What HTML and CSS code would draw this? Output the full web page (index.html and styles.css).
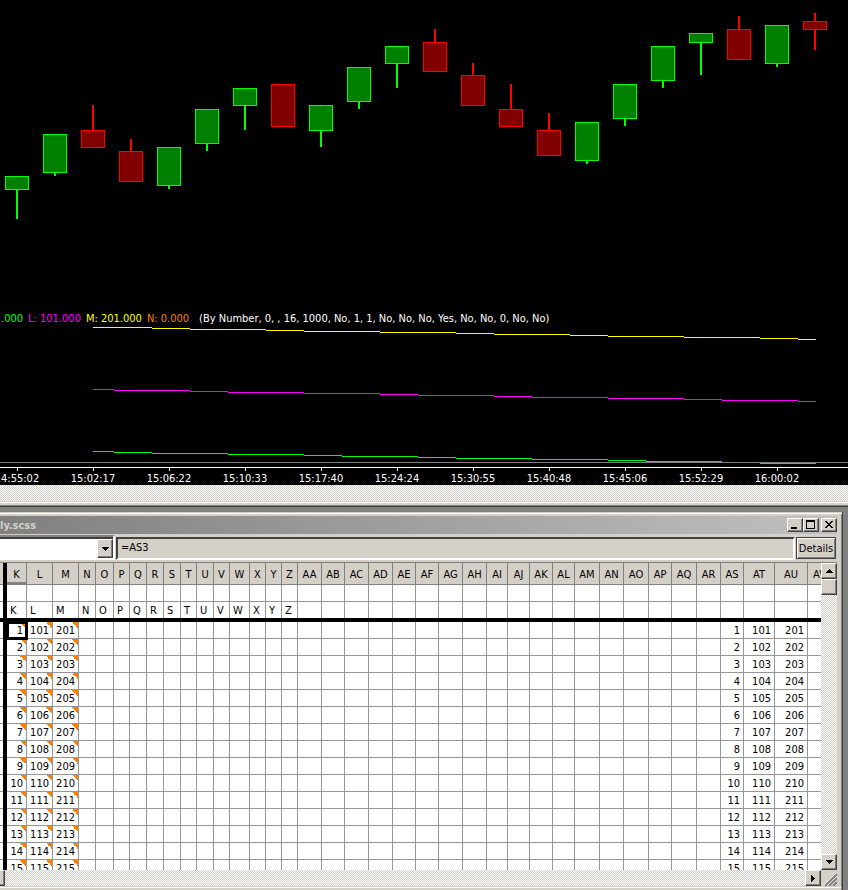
FILE: index.html
```html
<!DOCTYPE html>
<html lang="en">
<head>
    <meta charset="UTF-8">
    <meta name="viewport" content="width=device-width, initial-scale=1.0">
    <title>Chart and spreadsheet</title>
    <link rel="stylesheet" href="styles.css">
</head>
<body>
    <section class="chart">
        <svg class="candles" id="candles" height="311" shape-rendering="crispEdges"></svg>
        <p class="legend">
            <span class="green">.000</span>
            <span class="magenta">L: 101.000</span>
            <span class="yellow">M: 201.000</span>
            <span class="orange">N: 0.000</span>
            <span class="inputs">(By Number, 0, , 16, 1000, No, 1, 1, No, No, No, Yes, No, No, 0, No, No)</span>
        </p>
        <svg class="study" id="study" height="146" shape-rendering="crispEdges"></svg>
        <div class="times" id="times"></div>
    </section>
    <div class="chart-scroll"></div>
    <div class="chart-edge"></div>

    <main class="desk">
        <section class="window">
            <header class="title-bar">
                <h1 class="title">ly.scss</h1>
                <button class="win-btn" aria-label="Minimize"><svg width="12" height="10" shape-rendering="crispEdges"><path d="M2 7h6v2H2z"/></svg></button>
                <button class="win-btn" aria-label="Maximize"><svg width="12" height="10" shape-rendering="crispEdges"><path fill-rule="evenodd" d="M1 0h9v9H1zM2 2v6h7V2z"/></svg></button>
                <button class="win-btn close" aria-label="Close"><svg width="12" height="10" shape-rendering="crispEdges"><path d="M2 1h2v1h1v1h2V2h1V1h2v1H9v1H8v1H7v1h1v1h1v1h1v1H8V7H7V6H5v1H4v1H2V7h1V6h1V5h1V4H4V3H3V2H2z"/></svg></button>
            </header>
            <div class="formula-bar">
                <div class="cell-name">
                    <input class="name-box" type="text" aria-label="Cell name">
                    <button class="drop-btn" aria-label="Show names"><svg width="7" height="4" shape-rendering="crispEdges"><path d="M0 0h7v1H6v1H5v1H4v1H3V3H2V2H1V1H0z"/></svg></button>
                </div>
                <input class="formula" type="text" value="=AS3" aria-label="Formula">
                <button class="details">Details</button>
            </div>
            <div class="sheet">
                <div class="cells">
                    <table class="grid" id="grid"></table>
                </div>
                <div class="scroll-y">
                    <button class="scroll-btn" aria-label="Scroll up"><svg width="7" height="4" shape-rendering="crispEdges"><path d="M3 0h1v1h1v1h1v1h1v1H0V3h1V2h1V1h1z"/></svg></button>
                    <div class="thumb"></div>
                    <button class="scroll-btn last" aria-label="Scroll down"><svg width="7" height="4" shape-rendering="crispEdges"><path d="M0 0h7v1H6v1H5v1H4v1H3V3H2V2H1V1H0z"/></svg></button>
                </div>
                <div class="scroll-x">
                    <div class="thumb-end"></div>
                    <button class="scroll-btn" aria-label="Scroll right"><svg width="4" height="7" shape-rendering="crispEdges"><path d="M0 0h1v1h1v1h1v1h1v1H3v1H2v1H1v1H0z"/></svg></button>
                </div>
                <svg class="grip" width="16" height="16">
                    <path stroke="#fff" d="M3 15L15 3M7 15l8-8M11 15l4-4"/>
                    <path stroke="#808080" stroke-width="2" d="M4 16L16 4M8 16l8-8M12 16l4-4"/>
                </svg>
            </div>
        </section>
    </main>

<script>
    // [up or down, high, body top, body bottom, low]
    const candles = [
        ['up', 176, 176, 190, 219], ['up', 134, 134, 173, 176], ['down', 105, 130, 148, 148],
        ['down', 139, 151, 182, 182], ['up', 147, 147, 186, 189], ['up', 109, 109, 144, 151],
        ['up', 88, 88, 106, 130], ['down', 84, 84, 127, 127], ['up', 105, 105, 131, 147],
        ['up', 67, 67, 102, 109], ['up', 46, 46, 64, 88], ['down', 29, 42, 72, 72],
        ['down', 63, 75, 106, 106], ['down', 84, 109, 127, 127], ['down', 113, 130, 156, 156],
        ['up', 122, 122, 161, 164], ['up', 84, 84, 119, 126], ['up', 46, 46, 81, 88],
        ['up', 33, 33, 43, 75], ['down', 16, 29, 60, 60], ['up', 25, 25, 64, 67],
        ['down', 13, 21, 30, 50]
    ];
    const barSpacing = 38;

    let candleShapes = '';
    candles.forEach(([side, high, top, bottom, low], i) => {
        const x = 5 + i * barSpacing;
        candleShapes += `<g class="${side}">
            <rect class="wick" x="${x + 11}" y="${high}" width="2" height="${low - high}"/>
            <rect class="edge" x="${x}" y="${top}" width="24" height="${bottom - top}"/>
            <rect class="body" x="${x + 1}" y="${top + 1}" width="22" height="${bottom - top - 2}"/>
        </g>`;
    });
    document.querySelector('#candles').innerHTML = candleShapes;

    // every line drops one pixel at each of these x positions
    const lines = [
        ['#ffff00', 1, [93, 152, 190, 266, 304, 380, 456, 494, 570, 608, 684, 760, 798, 816]],
        ['#ff00ff', 63, [93, 114, 190, 228, 304, 380, 418, 494, 532, 608, 684, 722, 798, 816]],
        ['#00ff00', 125, [93, 114, 152, 228, 304, 342, 418, 456, 532, 608, 646, 722, 760, 816]]
    ];
    let studyShapes = '';
    lines.forEach(([color, y, stops]) => {
        for (let i = 0; i < stops.length - 1; i++) {
            studyShapes += `<rect fill="${color}" x="${stops[i]}" y="${y + i}" width="${stops[i + 1] - stops[i]}" height="1"/>`;
        }
    });
    studyShapes += '<rect fill="#808080" y="136" width="100%" height="1"/>';
    studyShapes += '<rect fill="#fff" y="141" width="100%" height="1"/>';

    const times = ['14:55:02', '15:02:17', '15:06:22', '15:10:33', '15:17:40', '15:24:24',
        '15:30:55', '15:40:48', '15:45:06', '15:52:29', '16:00:02'];
    times.forEach((time, i) => {
        studyShapes += `<rect fill="#fff" x="${17 + i * 76}" y="141" width="1" height="4"/>`;
    });
    document.querySelector('#study').innerHTML = studyShapes;
    document.querySelector('#times').innerHTML = times.map(time => `<span>${time}</span>`).join('');

    // the freeze column is the thick line left of K
    const columns = [
        ['', 3], ['freeze', 4], ['K', 20], ['L', 26], ['M', 26], ['N', 17], ['O', 18], ['P', 16], ['Q', 17],
        ['R', 17], ['S', 17], ['T', 16], ['U', 17], ['V', 16], ['W', 20], ['X', 16], ['Y', 16],
        ['Z', 16], ['AA', 24], ['AB', 23], ['AC', 24], ['AD', 24], ['AE', 23], ['AF', 23],
        ['AG', 24], ['AH', 24], ['AI', 21], ['AJ', 22], ['AK', 23], ['AL', 22], ['AM', 25],
        ['AN', 24], ['AO', 25], ['AP', 23], ['AQ', 25], ['AR', 24], ['AS', 23], ['AT', 31],
        ['AU', 33], ['AV', 24]
    ];
    const firstValue = { K: 1, L: 101, M: 201, AS: 1, AT: 101, AU: 201 };

    const row = (name, cell) => `<tr class="${name}">${columns.map(([col]) => cell(col)).join('')}</tr>`;
    let table = '<colgroup>' + columns.map(([col, width]) => `<col style="width: ${width}px">`).join('') + '</colgroup>';
    table += '<thead>' + row('head', col => `<th class="col-${col}">${col === 'freeze' ? '' : col}</th>`) + '</thead><tbody>';
    table += row('blank', col => `<td class="col-${col}"></td>`);
    table += row('names', col => `<td class="col-${col}">${col.length === 1 ? col : ''}</td>`);
    table += `<tr><td class="freeze-line" colspan="${columns.length}"></td></tr>`;
    for (let i = 0; i < 15; i++) {
        table += row('values', col => {
            const value = col in firstValue ? firstValue[col] + i : '';
            const note = 'KLM'.includes(col) && col ? ' note' : '';
            const active = col === 'K' && i === 0 ? ' active' : '';
            return `<td class="col-${col}${note}${active}">${value}</td>`;
        });
    }
    document.querySelector('#grid').innerHTML = table + '</tbody>';
</script>
</body>
</html>
```

FILE: styles.css
```css
*{
    box-sizing: border-box;
}
body{
    margin: 0;
    height: 100vh;
    display: flex;
    flex-direction: column;
    overflow: hidden;
    background-color: #808080;
    font-family: "DejaVu Sans Condensed", "DejaVu Sans", sans-serif;
    font-size: 11px;
    color: black;
}
button, input{
    font: inherit;
    color: inherit;
    margin: 0;
    padding: 0;
    border: none;
    border-radius: 0;
    outline: none;
}
svg{
    display: block;
}

/* chart */
.chart{
    background-color: black;
    color: white;
    overflow: hidden;
    flex: none;
}
.candles, .study{
    width: 100%;
}
.up .wick, .up .edge{
    fill: #00ff00;
}
.up .body{
    fill: #008000;
}
.down .wick, .down .edge{
    fill: #ff0000;
}
.down .body{
    fill: #800000;
}
.legend{
    display: flex;
    gap: 5px;
    margin: 0;
    padding-left: 1px;
    line-height: 15px;
    white-space: nowrap;
}
.green{
    color: #00ff00;
}
.magenta{
    color: #ff00ff;
}
.yellow{
    color: #ffff00;
}
.orange{
    color: #ff8000;
}
.inputs{
    margin-left: 5px;
}
.times{
    display: flex;
    margin-left: -21px;
    line-height: 13px;
}
.times span{
    flex: none;
    width: 76px;
    text-align: center;
}
.chart-scroll, .scroll-y, .scroll-x{
    background: repeating-conic-gradient(#d4d0c8 0 25%, #fff 0 50%) 0 0 / 2px 2px;
}
.chart-scroll{
    flex: none;
    height: 16px;
}
.chart-edge{
    flex: none;
    height: 6px;
    background-color: #d4d0c8;
    border-top: 1px solid #d4d0c8;
    border-bottom: 1px solid #404040;
    box-shadow: inset 0 1px #fff, inset 0 -1px #808080;
}

/* spreadsheet window */
.desk{
    flex: 1;
    min-height: 0;
    padding: 5px 5px 0 0;
}
.window{
    height: 100%;
    display: flex;
    flex-direction: column;
    padding: 4px 5px 4px 0;
    background-color: #d4d0c8;
    border-right: 1px solid #404040;
    box-shadow: inset 0 1px #d4d0c8, inset 0 2px #fff, inset -1px 0 #808080, inset 0 -2px #d4d0c8, inset 0 -3px #fff;
}
.title-bar{
    flex: none;
    height: 18px;
    display: flex;
    align-items: center;
    background: linear-gradient(to right, #808080, #c0c0c0);
}
.title{
    flex: 1;
    margin: 0;
    font-size: 11px;
    color: #d4d0c8;
}
.win-btn, .scroll-btn, .drop-btn, .thumb, .thumb-end{
    display: flex;
    align-items: center;
    justify-content: center;
    flex: none;
    background-color: #d4d0c8;
    border: 1px solid;
    border-color: #fff #404040 #404040 #fff;
    box-shadow: inset -1px -1px #808080;
}
.win-btn{
    width: 16px;
    height: 14px;
}
.close{
    margin-left: 2px;
}
.formula-bar{
    flex: none;
    display: flex;
    height: 29px;
    padding: 1px 1px 2px 0;
    border-bottom: 1px solid #808080;
}
.cell-name{
    flex: none;
    display: flex;
    width: 115px;
    border: 2px solid;
    border-color: #808080 #fff #fff #404040;
    border-left: none;
    box-shadow: inset 0 2px #404040;
    padding-top: 2px;
}
.name-box{
    flex: 1;
    min-width: 0;
    background-color: white;
}
.drop-btn{
    width: 16px;
}
.formula{
    flex: 1;
    min-width: 0;
    margin: 2px 1px 0;
    padding: 0 3px 3px;
    background-color: #d4d0c8;
    border: 2px solid;
    border-color: #404040 #fff #fff #404040;
}
.details{
    flex: none;
    width: 40px;
    margin: 2px 0 1px;
    background-color: #d4d0c8;
    border: 1px solid #404040;
    box-shadow: inset 1px 1px #fff, inset -1px -1px #808080;
}
.sheet{
    flex: 1;
    min-height: 0;
    display: grid;
    grid-template-columns: minmax(0, 1fr) 16px;
    grid-template-rows: minmax(0, 1fr) 16px;
}
.cells{
    overflow: hidden;
    background-color: white;
}
.grid{
    table-layout: fixed;
    width: 0;
    border-collapse: separate;
    border-spacing: 0;
}
.grid th, .grid td{
    height: 17px;
    padding: 2px 3px 0;
    border-right: 1px solid #969696;
    border-bottom: 1px solid #969696;
    line-height: 14px;
    font-weight: normal;
    white-space: nowrap;
    overflow: hidden;
}
.grid th{
    height: 22px;
    padding: 2px 0 0;
    background-color: #d4d0c8;
    border-color: #808080;
}
.grid .col-{
    padding: 0;
    border-right: none;
}
.grid .col-freeze{
    padding: 0;
    border: none;
    background-color: black;
}
.grid th.col-K{
    box-shadow: inset 0 -2px #808080;
}
.grid .names td{
    height: 16px;
    border-bottom: none;
    text-align: left;
}
.grid .freeze-line{
    height: 4px;
    padding: 0;
    border: none;
    background-color: black;
}
.values td{
    text-align: right;
}
.grid .note{
    background: linear-gradient(to bottom left, #ff8000 50%, transparent 50%) right top / 6px 6px no-repeat;
}
.grid .active{
    position: relative;
    overflow: visible;
}
.active::after{
    content: "";
    position: absolute;
    inset: -1px -2px -2px -1px;
    border: 3px solid black;
}
.scroll-y{
    display: flex;
    flex-direction: column;
}
.scroll-btn{
    width: 16px;
    height: 16px;
}
.thumb{
    height: 16px;
}
.last{
    margin-top: auto;
}
.scroll-x{
    display: flex;
    justify-content: space-between;
}
.thumb-end{
    width: 5px;
    border-left: none;
}
```
